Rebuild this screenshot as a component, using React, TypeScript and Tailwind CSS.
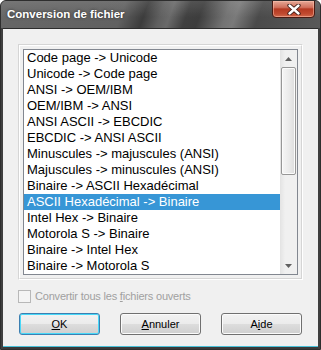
import React from "react";

const items = [
  "Code page -> Unicode",
  "Unicode -> Code page",
  "ANSI -> OEM/IBM",
  "OEM/IBM -> ANSI",
  "ANSI ASCII -> EBCDIC",
  "EBCDIC -> ANSI ASCII",
  "Minuscules -> majuscules (ANSI)",
  "Majuscules -> minuscules (ANSI)",
  "Binaire -> ASCII Hexadécimal",
  "ASCII Hexadécimal -> Binaire",
  "Intel Hex -> Binaire",
  "Motorola S -> Binaire",
  "Binaire -> Intel Hex",
  "Binaire -> Motorola S",
];

function VButton({ children, def }: { children: React.ReactNode; def?: boolean }) {
  return (
    <div
      className={
        "w-[81px] h-[22px] rounded-[3px] border flex items-center justify-center text-[11px] text-black bg-[linear-gradient(180deg,#f2f2f2_0%,#ebebeb_50%,#dddddd_51%,#cfcfcf_100%)] " +
        (def
          ? "border-[#3c7fb1] shadow-[inset_0_0_0_1px_#48d8f8]"
          : "border-[#707070] shadow-[inset_0_0_0_1px_#fbfbfb]")
      }
    >
      {children}
    </div>
  );
}

export default function App() {
  return (
    <div className="w-[321px] h-[350px] bg-white font-['Liberation_Sans',Arial,sans-serif]">
      <div className="w-full h-full flex flex-col rounded-t-[6px] overflow-hidden bg-[#3f3f3f] border border-[#2e2e2e]">
        {/* Title bar */}
        <div className="h-[27px] relative shrink-0 bg-[linear-gradient(180deg,rgba(255,255,255,0.10),rgba(255,255,255,0)_60%),linear-gradient(110deg,#676767_0%,#616161_38%,#3c3c3c_45%,#5f5f5f_50%,#6a6a6a_53%,#404040_58%,#3d3d3d_62%,#737373_70%,#7a7a7a_73%,#4a4a4a_80%,#595959_100%)]">
          <span className="absolute left-[6px] top-[6px] text-white font-bold text-[11.5px] leading-[14px] [text-shadow:0_0_3px_rgba(0,0,0,0.6)]">
            Conversion de fichier
          </span>
          <div className="absolute right-[5px] top-[-1px] w-[43px] h-[18px] rounded-b-[4px] border border-[#4a1a12] bg-[linear-gradient(180deg,#e6a997_0%,#d0705c_40%,#b53a22_50%,#c14a30_80%,#d06a4e_100%)] shadow-[inset_0_0_0_1px_rgba(255,200,180,0.5)] flex items-center justify-center">
            <svg width="14" height="11" viewBox="0 0 14 11">
              <path d="M2.5 1.5 L11.5 9.5 M11.5 1.5 L2.5 9.5" stroke="#3a1a14" strokeWidth="4.2" strokeLinecap="round" />
              <path d="M2.5 1.5 L11.5 9.5 M11.5 1.5 L2.5 9.5" stroke="#ffffff" strokeWidth="2.4" strokeLinecap="round" />
            </svg>
          </div>
        </div>

        {/* Client area */}
        <div className="flex-1 mx-[2px] bg-[#f0f0f0] border-t border-[#2c2c2c] flex flex-col pl-[15px] pr-[15px] pt-[15px]">
          {/* Etched panel */}
          <div className="w-[285px] h-[236px] border-t border-l border-[#d5d5d5] border-b border-r border-b-white border-r-white">
            <div className="w-full h-full border-t border-l border-white border-b border-r border-b-[#d5d5d5] border-r-[#d5d5d5] p-[3px]">
              {/* Listbox */}
              <div className="w-[275px] h-[226px] border border-[#828790] bg-white flex">
                <div className="flex-1 flex flex-col">
                  {items.map((it, i) => (
                    <div
                      key={i}
                      className={
                        "h-[16px] leading-[16px] pl-[3px] text-[13px] whitespace-nowrap " +
                        (i === 9 ? "bg-[#3796d6] text-white" : "text-black")
                      }
                    >
                      {it}
                    </div>
                  ))}
                </div>
                {/* Scrollbar */}
                <div className="w-[17px] h-full bg-[linear-gradient(90deg,#e3e3e3,#f0f0f0_30%,#f0f0f0)] flex flex-col">
                  <div className="h-[17px] flex items-center justify-center">
                    <svg width="7" height="4" viewBox="0 0 7 4">
                      <path d="M3.5 0 L7 4 L0 4 Z" fill="#606060" />
                    </svg>
                  </div>
                  <div className="mx-[1px] h-[108px] rounded-[2px] border border-[#979797] bg-[linear-gradient(90deg,#f6f6f6,#e9e9e9_60%,#dcdcdc)] shadow-[inset_0_0_0_1px_#fbfbfb]" />
                  <div className="flex-1" />
                  <div className="h-[17px] flex items-center justify-center">
                    <svg width="7" height="4" viewBox="0 0 7 4">
                      <path d="M0 0 L7 0 L3.5 4 Z" fill="#606060" />
                    </svg>
                  </div>
                </div>
              </div>
            </div>
          </div>

          {/* Checkbox */}
          <div className="mt-[10px] h-[13px] flex items-center gap-[4px]">
            <div className="w-[13px] h-[13px] border border-[#b8b8b8] bg-[#f4f4f4]" />
            <span className="text-[11px] text-[#a0a0a0] tracking-[-0.2px] leading-[13px]">
              Convertir tous les <u>f</u>ichiers ouverts
            </span>
          </div>

          {/* Buttons */}
          <div className="mt-[10px] ml-[1px] w-[283px] flex justify-between">
            <VButton def>
              <u>O</u>K
            </VButton>
            <VButton>
              <u>A</u>nnuler
            </VButton>
            <VButton>
              A<u>i</u>de
            </VButton>
          </div>
        </div>

        {/* Bottom frame */}
        <div className="h-[3px] mx-[2px] border-t border-[#48c0d8] bg-[#3a3a3a] shrink-0" />
      </div>
    </div>
  );
}
